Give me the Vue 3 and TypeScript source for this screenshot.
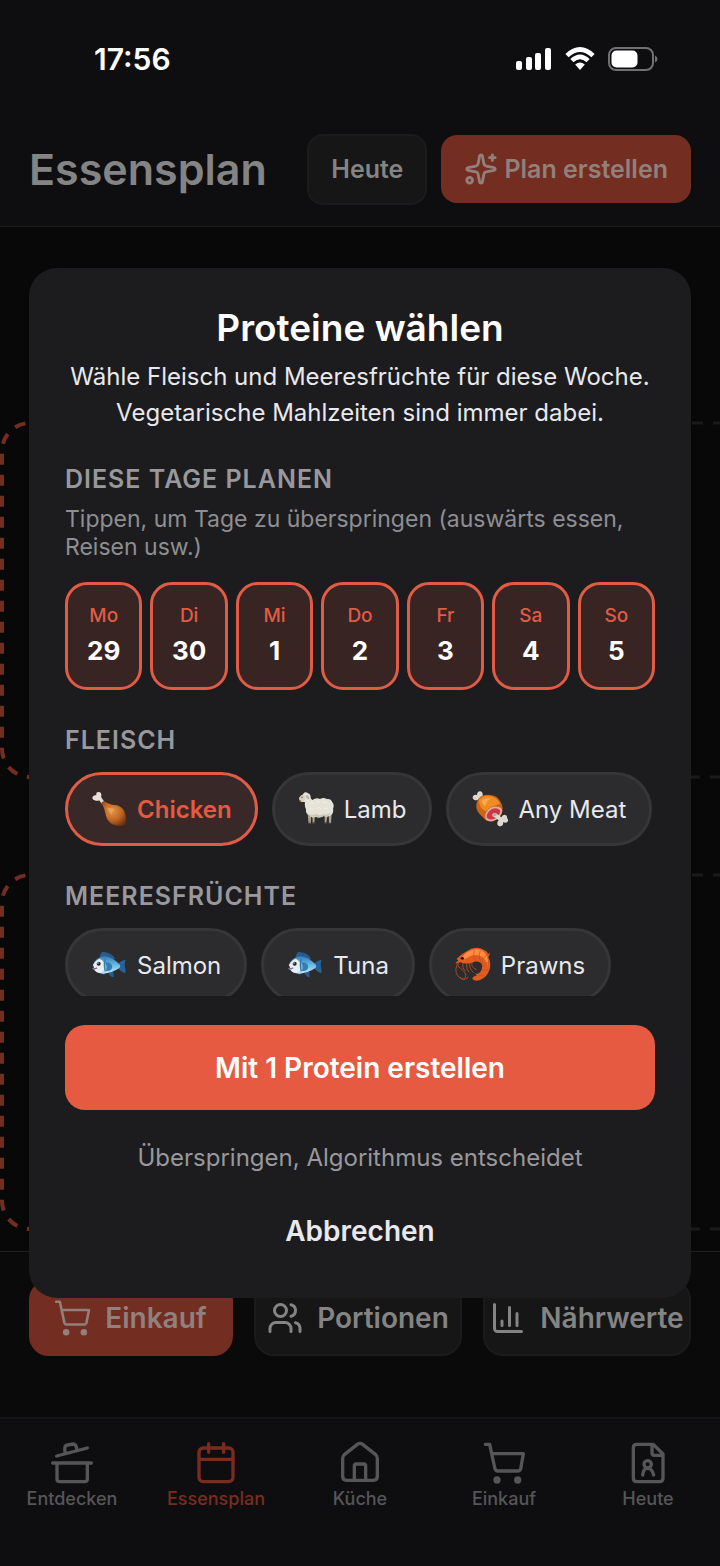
<script setup lang="ts">
import { computed, ref } from 'vue'

interface Day { label: string; date: number; active: boolean }
interface Protein { id: string; name: string; art: string; selected: boolean }
interface Tab { id: string; label: string }

const days = ref<Day[]>([
  { label: 'Mo', date: 29, active: true },
  { label: 'Di', date: 30, active: true },
  { label: 'Mi', date: 1, active: true },
  { label: 'Do', date: 2, active: true },
  { label: 'Fr', date: 3, active: true },
  { label: 'Sa', date: 4, active: true },
  { label: 'So', date: 5, active: true },
])

const meats = ref<Protein[]>([
  { id: 'chicken', name: 'Chicken', art: 'drumstick', selected: true },
  { id: 'lamb', name: 'Lamb', art: 'sheep', selected: false },
  { id: 'any-meat', name: 'Any Meat', art: 'meat', selected: false },
])

const seafood = ref<Protein[]>([
  { id: 'salmon', name: 'Salmon', art: 'fish', selected: false },
  { id: 'tuna', name: 'Tuna', art: 'fish', selected: false },
  { id: 'prawns', name: 'Prawns', art: 'prawn', selected: false },
])

const groups = computed(() => [
  { title: 'Fleisch', items: meats.value },
  { title: 'Meeresfrüchte', items: seafood.value },
])

const selectedCount = computed(() => [...meats.value, ...seafood.value].filter((p) => p.selected).length)
const createLabel = computed(() => `Mit ${selectedCount.value} ${selectedCount.value === 1 ? 'Protein' : 'Proteinen'} erstellen`)

const activeTab = ref('plan')
const tabs: Tab[] = [
  { id: 'discover', label: 'Entdecken' },
  { id: 'plan', label: 'Essensplan' },
  { id: 'kitchen', label: 'Küche' },
  { id: 'shopping', label: 'Einkauf' },
  { id: 'today', label: 'Heute' },
]
</script>

<template>
  <div class="screen">
    <div class="status">
      <span class="clock">17:56</span>
      <div class="status-icons">
        <svg width="36" height="24" viewBox="0 0 36 24" fill="#fff" aria-hidden="true">
          <rect x="0" y="14" width="6" height="9" rx="2" />
          <rect x="10" y="10" width="6" height="13" rx="2" />
          <rect x="19" y="6" width="6" height="17" rx="2" />
          <rect x="29" y="1" width="6" height="22" rx="2" />
        </svg>
        <svg width="30" height="24" viewBox="0 0 30 24" aria-hidden="true">
          <path d="M2 8.6Q15-3.6 28 8.6M6.9 13.6Q15 6 23.1 13.6" fill="none" stroke="#fff" stroke-width="4.6" />
          <path d="M10.2 17.6Q15 13.400 19.8 17.600L15 23Z" fill="#fff" />
        </svg>
        <svg width="50" height="24" viewBox="0 0 50 24" aria-hidden="true">
          <rect x="1" y="1" width="44" height="22" rx="7" fill="none" stroke="#717173" stroke-width="2" />
          <rect x="3.500" y="3.500" width="26" height="17" rx="5" fill="#fff" />
          <path d="M47 8.500Q49.500 9.500 49.500 12T47 15.500Z" fill="#717173" />
        </svg>
      </div>
    </div>

    <header class="header">
      <h1>Essensplan</h1>
      <button class="btn-today" type="button">Heute</button>
      <button class="btn-plan" type="button">
        <svg class="line-icon" width="34" height="34" viewBox="0 0 24 24" aria-hidden="true">
          <path d="M11.017 2.814a1 1 0 0 1 1.966 0l1.051 5.558a2 2 0 0 0 1.594 1.594l5.558 1.051a1 1 0 0 1 0 1.966l-5.558 1.051a2 2 0 0 0-1.594 1.594l-1.051 5.558a1 1 0 0 1-1.966 0l-1.051-5.558a2 2 0 0 0-1.594-1.594l-5.558-1.051a1 1 0 0 1 0-1.966l5.558-1.051a2 2 0 0 0 1.594-1.594zM20 2v4M22 4h-4" />
          <circle cx="4" cy="20" r="2" />
        </svg>
        Plan erstellen
      </button>
    </header>

    <main class="board">
      <div v-for="row in 2" :key="row" class="board-row">
        <svg class="slot slot-active" aria-hidden="true"><rect x="2" y="2" rx="28" /></svg>
        <svg class="slot" aria-hidden="true"><rect x="2" y="2" rx="28" /></svg>
      </div>
    </main>

    <div class="actions">
      <button class="action action-main" type="button">
        <svg class="line-icon cart" width="36" height="36" viewBox="0 0 126 126" aria-hidden="true">
          <path d="M4 6H17L33 80Q35 86 41 86H102Q108 86 110 80L119 35H25" />
          <circle cx="39" cy="113" r="7" /><circle cx="101" cy="113" r="7" />
        </svg>
        Einkauf
      </button>
      <button class="action" type="button">
        <svg class="line-icon" width="36" height="36" viewBox="0 0 24 24" aria-hidden="true">
          <path d="M16 21v-2a4 4 0 0 0-4-4H6a4 4 0 0 0-4 4v2M16 3.128a4 4 0 0 1 0 7.744M22 21v-2a4 4 0 0 0-3-3.870" />
          <circle cx="9" cy="7" r="4" />
        </svg>
        Portionen
      </button>
      <button class="action" type="button">
        <svg class="line-icon" width="36" height="36" viewBox="0 0 24 24" aria-hidden="true">
          <path d="M3 3v16a2 2 0 0 0 2 2h16M8 17v-3M13 17V5M18 17V9" />
        </svg>
        Nährwerte
      </button>
    </div>

    <nav class="tabs">
      <a v-for="tab in tabs" :key="tab.id" href="#" class="tab" :class="{ current: tab.id === activeTab }" @click.prevent="activeTab = tab.id">
        <svg class="tab-icon" viewBox="0 0 126 126" aria-hidden="true">
          <g v-if="tab.id === 'discover'">
            <path d="M17 42L109 18M43 34Q37 10 50 9L66 6Q77 6 77 24M5 63H121M18 63V111Q18 119 26 119H101Q109 119 109 111V63" />
          </g>
          <g v-else-if="tab.id === 'plan'">
            <rect x="12" y="18" width="102" height="101" rx="13" />
            <path d="M12 52H114M41 5V31M86 5V31" />
          </g>
          <g v-else-if="tab.id === 'kitchen'">
            <path d="M11 49Q11 42 17 37L55 7Q63 1 71 7L109 37Q115 42 115 49V103Q115 115 103 115H23Q11 115 11 103ZM46 115V72Q46 66 52 66H74Q80 66 80 72V115" />
          </g>
          <g v-else-if="tab.id === 'shopping'">
            <path d="M7 7H20L36 81Q38 87 44 87H105Q111 87 113 81L121 35H28" />
            <circle class="solid" cx="42" cy="114" r="6" /><circle class="solid" cx="104" cy="114" r="6" />
          </g>
          <g v-else>
            <path d="M29 7H79L108 36V109Q108 119 98 119H29Q19 119 19 109V17Q19 7 29 7ZM75 7V32Q75 40 83 40H108M47 99Q49 79 62 79T80 99" />
            <circle cx="62" cy="67" r="11" />
          </g>
        </svg>
        <span>{{ tab.label }}</span>
      </a>
    </nav>

    <div class="overlay">
      <section class="dialog" role="dialog" aria-modal="true" aria-labelledby="dialog-title">
        <h2 id="dialog-title">Proteine wählen</h2>
        <p class="intro">Wähle Fleisch und Meeresfrüchte für diese Woche. Vegetarische Mahlzeiten sind immer dabei.</p>

        <div class="scroller">
          <h3>Diese Tage planen</h3>
          <p class="hint">Tippen, um Tage zu überspringen (auswärts essen, Reisen usw.)</p>
          <div class="days">
            <button v-for="day in days" :key="day.label" type="button" class="day" :class="{ on: day.active }" :aria-pressed="day.active" @click="day.active = !day.active">
              <span class="day-name">{{ day.label }}</span>
              <span class="day-date">{{ day.date }}</span>
            </button>
          </div>

          <template v-for="group in groups" :key="group.title">
            <h3>{{ group.title }}</h3>
            <div class="chips">
              <button v-for="item in group.items" :key="item.id" type="button" class="chip" :class="{ on: item.selected }" :aria-pressed="item.selected" @click="item.selected = !item.selected">
                <svg v-if="item.art === 'drumstick'" class="art" viewBox="0 0 108 108" aria-hidden="true">
                  <defs>
                    <radialGradient id="leg" cx="0.45" cy="0.4" r="0.65">
                      <stop offset="0" stop-color="#e29445" /><stop offset="0.6" stop-color="#bd6422" /><stop offset="1" stop-color="#743311" />
                    </radialGradient>
                  </defs>
                  <path d="M20 20L34 38L40 32L28 14Z" fill="#cfc3b6" />
                  <path d="M25 28Q18 31 11 28Q2 25 5 17Q8 11 16 13Q14 3 23 3Q32 4 31 14L30 21L38 32L32 38Z" fill="#e9e1d8" />
                  <path d="M31 36Q34 29 42 32Q56 41 78 43Q99 49 104 73Q107 95 99 101Q84 109 65 100Q47 91 44 70Q42 52 31 36Z" fill="url(#leg)" />
                  <path d="M48 49Q60 54 72 53Q63 59 62 72Q51 62 48 49Z" fill="#f3ae62" opacity=".65" />
                </svg>
                <svg v-else-if="item.art === 'sheep'" class="art" viewBox="0 0 108 108" aria-hidden="true">
                  <path d="M29 70L32 98H38L40 72ZM43 74L44 97H49L51 73ZM80 70L80 97H85L89 70ZM92 66L93 98H99L101 66Z" fill="#aaa18b" />
                  <path d="M31 95H38V99H30ZM43 94H49V98H43ZM80 94H86V98H79ZM93 95H99V99H92Z" fill="#4b4032" />
                  <path d="M16 8Q22 0 30 7Q39 10 38 22L43 27Q55 19 66 24Q77 18 86 24Q99 22 103 34Q110 42 105 53Q108 65 100 72Q88 81 77 75Q64 83 53 77Q41 83 34 73Q22 68 24 55Q19 47 21 33L10 32Q3 29 7 22Z" fill="#e5e3d8" />
                  <path d="M7 16Q10 9 18 12L23 22L17 32Q8 36 4 27L3 20Z" fill="#d8d1c1" />
                  <path d="M23 13Q35 14 33 25Q26 25 23 13Z" fill="#b7ad98" />
                  <circle cx="12" cy="19" r="2" fill="#39322b" />
                  <path d="M3 26L9 29L7 34L3 31Z" fill="#6b5744" />
                  <path d="M31 68Q43 76 54 69Q66 76 76 69Q89 74 99 64Q92 81 78 75Q62 83 52 76Q39 80 31 68Z" fill="#cbc7b6" />
                  <path d="M36 39q7-9 12 0m6-5q8-7 12 2m8-1q9-7 13 3M35 55q8-6 12 2m9-5q9-6 13 2m9-1q9-5 12 2" fill="none" stroke="#f2f0e8" stroke-width="3" />
                </svg>
                <svg v-else-if="item.art === 'meat'" class="art" viewBox="0 0 108 108" aria-hidden="true">
                  <path d="M27 30L21 24Q14 31 6 26Q-1 21 4 14Q7 10 15 12Q15 2 24 1Q32 2 32 10Q31 16 38 22Z" fill="#ddd8ce" />
                  <path d="M19 24Q31 9 53 12Q76 12 86 34Q94 48 91 61Q84 84 61 91Q45 94 34 80Q10 61 13 42Q14 31 19 24Z" fill="#cb6417" />
                  <path d="M21 26Q34 12 54 15Q75 19 84 38Q73 41 62 46Q50 49 42 61Q20 51 21 26Z" fill="#ef8d25" />
                  <path d="M29 31Q39 18 55 23Q43 29 40 44Q33 43 29 31Z" fill="#ffad49" />
                  <path d="M47 58Q60 43 80 48Q93 52 90 64Q84 83 66 89Q50 94 42 85Q35 74 47 58Z" fill="#efa69a" />
                  <path d="M51 61Q62 49 77 53Q87 56 84 65Q77 80 62 85Q50 87 45 80Q41 73 51 61Z" fill="#c83948" />
                  <path d="M61 70Q68 62 75 69L88 79Q90 71 98 71Q107 72 105 81Q112 88 105 94Q99 97 93 93Q96 104 86 106Q75 106 76 96Q76 92 80 88L67 78Q60 78 61 70Z" fill="#ded9cf" />
                  <ellipse cx="68" cy="71" rx="6" ry="5" fill="#b4aaa1" />
                </svg>
                <svg v-else-if="item.art === 'fish'" class="art" viewBox="0 0 108 108" aria-hidden="true">
                  <defs>
                    <linearGradient id="scales" x1="0" y1="0" x2="0" y2="1">
                      <stop offset="0" stop-color="#397eb5" /><stop offset="0.48" stop-color="#66b7e5" /><stop offset="1" stop-color="#c7e8f5" />
                    </linearGradient>
                  </defs>
                  <path d="M26 29Q31 12 38 15Q62 17 73 36L55 43ZM52 78Q61 94 68 89L67 73ZM27 74Q35 87 42 82L44 73Z" fill="#285b91" />
                  <path d="M80 51Q96 37 104 39Q99 51 102 60Q105 68 103 78Q93 77 80 62Z" fill="#286298" />
                  <path d="M5 55Q15 31 37 28Q62 28 85 52Q91 59 84 64Q62 79 37 80Q17 80 9 67L5 65L10 61Z" fill="url(#scales)" />
                  <path d="M6 55Q14 39 26 35Q43 42 41 62Q38 76 27 78Q14 76 9 67L4 66L10 61Z" fill="#e9eff0" />
                  <path d="M44 46Q61 43 64 60Q61 74 45 72Q49 60 44 46Z" fill="#347fb2" />
                  <path d="M43 36Q37 53 43 73" fill="none" stroke="#327bb0" stroke-width="4" />
                  <circle cx="23" cy="50" r="6" fill="#1b2938" /><circle cx="21" cy="48" r="2" fill="#fff" />
                  <path d="M5 65Q14 66 18 62" fill="none" stroke="#8269a1" stroke-width="4" />
                </svg>
                <svg v-else class="art" viewBox="0 0 108 108" aria-hidden="true">
                  <path d="M13 43Q-5 66 8 86Q25 107 40 90M15 42Q2 57 17 64Q37 80 31 91Q26 102 15 90M35 49Q33 68 42 76M45 47Q40 64 56 77M51 45Q47 62 65 68M24 46Q20 62 31 72" fill="none" stroke="#a94924" stroke-width="3" />
                  <path d="M5 36Q18 22 35 13Q61-5 86 8Q100 14 98 22L106 17L100 31Q109 47 104 67Q97 91 75 99Q61 104 52 96Q54 87 67 85L59 80Q79 82 81 62Q84 52 75 46Q63 40 51 47Q31 53 14 45L2 50Q1 45 10 41Z" fill="#e15b22" />
                  <path d="M19 32Q41 6 69 7Q87 10 96 28Q101 43 98 55Q91 32 76 27Q58 19 40 31Q30 39 19 32Z" fill="#ff8d3d" />
                  <path d="M58 9Q51 23 62 41M76 10Q69 25 76 44M96 24Q82 30 81 51M102 45Q92 46 82 61M99 69Q91 67 80 71M87 89Q82 83 71 84" fill="none" stroke="#c94a1e" stroke-width="2" />
                  <ellipse cx="22" cy="34" rx="5" ry="4" fill="#24150f" />
                </svg>
                <span>{{ item.name }}</span>
              </button>
            </div>
          </template>
        </div>

        <button class="create" type="button">{{ createLabel }}</button>
        <button class="skip" type="button">Überspringen, Algorithmus entscheidet</button>
        <button class="cancel" type="button">Abbrechen</button>
      </section>
    </div>
  </div>
</template>

<style>
body {
  margin: 0;
  background: #080809;
}
</style>

<style scoped>
* {
  box-sizing: border-box;
}

button {
  font: inherit;
  margin: 0;
  padding: 0;
  border: 0;
  background: none;
  color: inherit;
  cursor: pointer;
  white-space: nowrap;
}

h1, h2, h3, p {
  margin: 0;
}

.screen {
  position: relative;
  display: flex;
  flex-direction: column;
  min-height: 100vh;
  overflow: hidden;
  background: #080809;
  color: #848484;
  font-family: Inter, "Liberation Sans", sans-serif;
}

.status {
  display: flex;
  align-items: center;
  justify-content: space-between;
  height: 118px;
  padding: 0 62px 0 94px;
  background: #0e0e10;
  color: #fff;
}

.clock {
  font-size: 30px;
  font-weight: 600;
}

.status-icons {
  display: flex;
  align-items: center;
  gap: 13px;
}

.header {
  display: flex;
  align-items: center;
  height: 109px;
  padding: 0 29px 6px;
  border-bottom: 1px solid #1e1e1f;
  background: #0e0e10;
}

.header h1 {
  flex: 1;
  font-size: 43px;
  font-weight: 600;
}

.btn-today,
.btn-plan {
  display: flex;
  align-items: center;
  justify-content: center;
  border-radius: 16px;
  font-size: 25px;
  font-weight: 600;
}

.btn-today {
  height: 71px;
  padding: 0 22px;
  margin-right: 14px;
  border: 2px solid #1b1b1c;
  background: #161616;
}

.btn-plan {
  gap: 6px;
  height: 68px;
  padding: 0 23px;
  background: #732d21;
  color: #91807c;
}

.line-icon {
  flex: none;
  fill: none;
  stroke: currentColor;
  stroke-width: 2;
  stroke-linecap: round;
  stroke-linejoin: round;
}

.cart {
  stroke-width: 9;
}

.cart circle {
  fill: currentColor;
}

.board {
  flex: 1;
  display: flex;
  flex-direction: column;
  justify-content: flex-end;
  gap: 94px;
  padding-bottom: 20px;
}

.board-row {
  display: grid;
  grid-template-columns: 90% 90%;
  gap: 14px;
  overflow: hidden;
}

.slot {
  width: 100%;
  height: 358px;
}

.slot rect {
  width: calc(100% - 4px);
  height: calc(100% - 4px);
  fill: none;
  stroke: #1a1a1b;
  stroke-width: 3;
  stroke-dasharray: 11 10;
}

.slot-active rect {
  stroke: #732d21;
  stroke-width: 4;
}

.actions {
  display: grid;
  grid-template-columns: 204fr 208fr 208fr;
  gap: 21px;
  height: 166px;
  padding: 28px 29px 61px;
  border-top: 1px solid #1e1e1f;
  background: #0a0a0b;
}

.action {
  display: flex;
  align-items: center;
  justify-content: center;
  gap: 14px;
  border: 2px solid #1b1b1c;
  border-radius: 20px;
  background: #161616;
  font-size: 28px;
  font-weight: 600;
}

.action-main {
  border-color: #732d21;
  background: #732d21;
  color: #91807c;
}

.tabs {
  display: grid;
  grid-template-columns: repeat(5, 1fr);
  height: 149px;
  padding-top: 23px;
  border-top: 2px solid #151516;
  background: #0e0e10;
}

.tab {
  display: flex;
  flex-direction: column;
  align-items: center;
  gap: 3px;
  color: #565658;
  font-size: 18px;
  font-weight: 500;
  line-height: 24px;
  text-decoration: none;
}

.tab.current {
  color: #7a2c20;
}

.tab-icon {
  width: 42px;
  height: 42px;
  overflow: visible;
  fill: none;
  stroke: currentColor;
  stroke-width: 10;
  stroke-linecap: round;
  stroke-linejoin: round;
}

.solid {
  fill: currentColor;
}

.overlay {
  position: absolute;
  inset: 0;
  display: flex;
  align-items: center;
  padding: 0 29px;
}

.dialog {
  display: flex;
  flex-direction: column;
  width: 100%;
  padding: 36px;
  border-radius: 28px;
  background: #1c1c1e;
}

.dialog h2 {
  color: #fff;
  font-size: 37px;
  font-weight: 600;
  line-height: 48px;
  text-align: center;
}

.intro {
  margin: 7px -12px 0;
  color: #e8e8ed;
  font-size: 24px;
  line-height: 36px;
  text-align: center;
}

.scroller {
  height: 546px;
  margin-top: 19px;
  overflow-y: auto;
  scrollbar-width: none;
}

.scroller h3 {
  padding-top: 13px;
  color: #98989d;
  font-size: 25px;
  font-weight: 600;
  line-height: 32px;
  letter-spacing: 1px;
  text-transform: uppercase;
}

.hint {
  margin: 10px 0 21px;
  color: #8e8e93;
  font-size: 23px;
  line-height: 28px;
}

.days {
  display: grid;
  grid-template-columns: repeat(7, 1fr);
  gap: 8px;
  margin-bottom: 21px;
}

.day {
  display: flex;
  flex-direction: column;
  align-items: center;
  justify-content: center;
  gap: 4px;
  height: 108px;
  padding-bottom: 3px;
  border: 3px solid #38383a;
  border-radius: 22px;
  background: #2c2c2e;
}

.day.on {
  border-color: #e05c45;
  background: #372423;
}

.day-name {
  color: #e05c45;
  font-size: 19px;
  font-weight: 500;
  line-height: 28px;
}

.day-date {
  color: #fff;
  font-size: 26px;
  font-weight: 700;
  line-height: 34px;
}

.chips {
  display: flex;
  gap: 14px;
  margin: 16px 0 21px;
}

.chip {
  display: flex;
  align-items: center;
  gap: 10px;
  height: 74px;
  padding: 0 23px;
  border: 3px solid #363638;
  border-radius: 37px;
  background: #2c2c2e;
  color: #e8e8ed;
  font-size: 24px;
}

.chip.on {
  border-color: #e05c45;
  background: #382928;
  color: #e65a42;
  font-weight: 600;
}

.art {
  flex: none;
  width: 36px;
  height: 36px;
}

.create {
  height: 85px;
  margin-top: 29px;
  border-radius: 20px;
  background: #e65a42;
  color: #fff;
  font-size: 28px;
  font-weight: 600;
}

.skip {
  margin-top: 30px;
  color: #98989d;
  font-size: 24px;
  line-height: 36px;
}

.cancel {
  margin: 36px 0 12px;
  color: #e8e8ed;
  font-size: 28px;
  font-weight: 600;
  line-height: 38px;
}
</style>
